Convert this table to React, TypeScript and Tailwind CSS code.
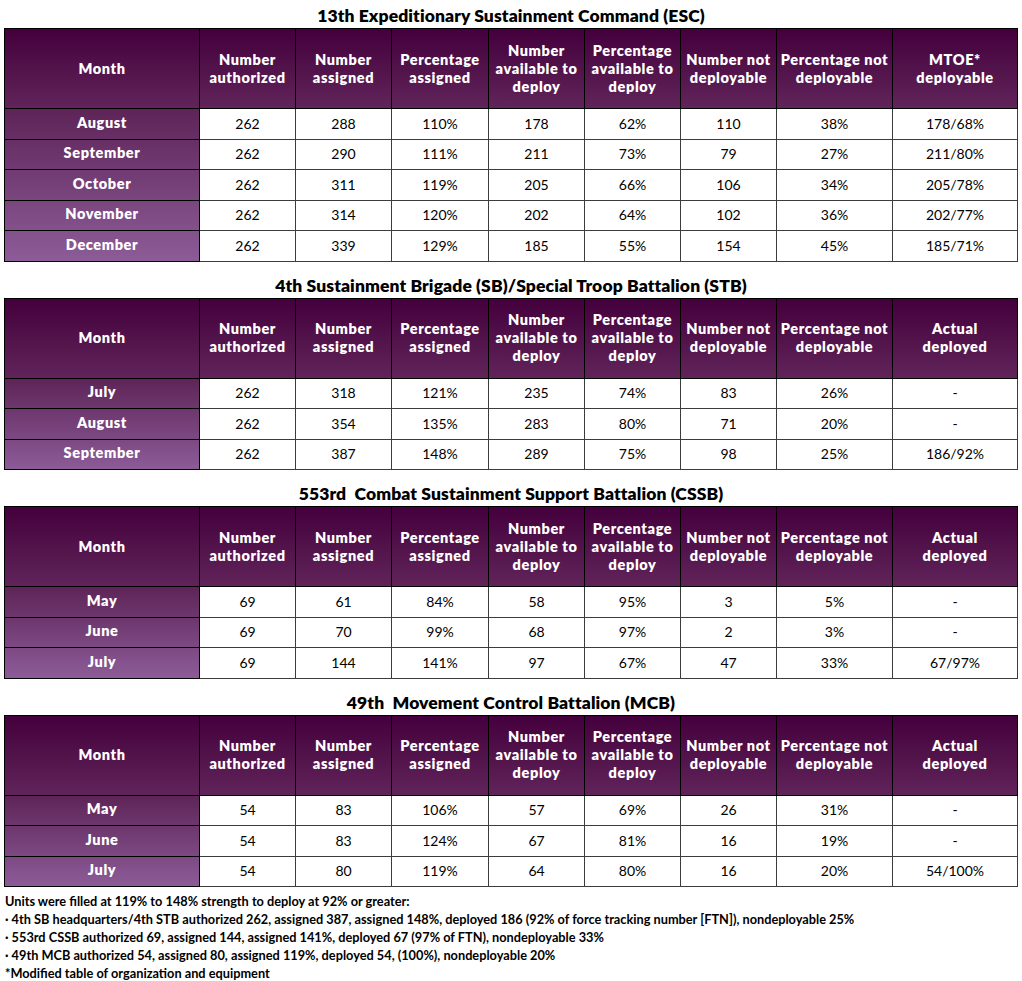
import React from "react";

const FONT = { fontFamily: "Lato, 'Open Sans', 'Liberation Sans', sans-serif" };

type Table = {
  title: string;
  last: string[];
  rows: string[][];
  monthBg: string[];
};

const headers: string[][] = [
  ["Month"],
  ["Number", "authorized"],
  ["Number", "assigned"],
  ["Percentage", "assigned"],
  ["Number", "available to", "deploy"],
  ["Percentage", "available to", "deploy"],
  ["Number not", "deployable"],
  ["Percentage not", "deployable"],
];

const bg5 = [
  "bg-linear-to-b from-[#5e2458] to-[#672f65]",
  "bg-linear-to-b from-[#672f65] to-[#703a72]",
  "bg-linear-to-b from-[#703a72] to-[#7a467e]",
  "bg-linear-to-b from-[#7a467e] to-[#83518b]",
  "bg-linear-to-b from-[#83518b] to-[#8c5c98]",
];
const bg3 = [
  "bg-linear-to-b from-[#5e2458] to-[#6d376d]",
  "bg-linear-to-b from-[#6d376d] to-[#7d4983]",
  "bg-linear-to-b from-[#7d4983] to-[#8c5c98]",
];

const tables: Table[] = [
  {
    title: "13th Expeditionary Sustainment Command (ESC)",
    last: ["MTOE*", "deployable"],
    monthBg: bg5,
    rows: [
      ["August", "262", "288", "110%", "178", "62%", "110", "38%", "178/68%"],
      ["September", "262", "290", "111%", "211", "73%", "79", "27%", "211/80%"],
      ["October", "262", "311", "119%", "205", "66%", "106", "34%", "205/78%"],
      ["November", "262", "314", "120%", "202", "64%", "102", "36%", "202/77%"],
      ["December", "262", "339", "129%", "185", "55%", "154", "45%", "185/71%"],
    ],
  },
  {
    title: "4th Sustainment Brigade (SB)/Special Troop Battalion (STB)",
    last: ["Actual", "deployed"],
    monthBg: bg3,
    rows: [
      ["July", "262", "318", "121%", "235", "74%", "83", "26%", "-"],
      ["August", "262", "354", "135%", "283", "80%", "71", "20%", "-"],
      ["September", "262", "387", "148%", "289", "75%", "98", "25%", "186/92%"],
    ],
  },
  {
    title: "553rd\u00a0 Combat Sustainment Support Battalion (CSSB)",
    last: ["Actual", "deployed"],
    monthBg: bg3,
    rows: [
      ["May", "69", "61", "84%", "58", "95%", "3", "5%", "-"],
      ["June", "69", "70", "99%", "68", "97%", "2", "3%", "-"],
      ["July", "69", "144", "141%", "97", "67%", "47", "33%", "67/97%"],
    ],
  },
  {
    title: "49th\u00a0 Movement Control Battalion (MCB)",
    last: ["Actual", "deployed"],
    monthBg: bg3,
    rows: [
      ["May", "54", "83", "106%", "57", "69%", "26", "31%", "-"],
      ["June", "54", "83", "124%", "67", "81%", "16", "19%", "-"],
      ["July", "54", "80", "119%", "64", "80%", "16", "20%", "54/100%"],
    ],
  },
];

function DataTable({ t, first }: { t: Table; first: boolean }) {
  const hdrs = [...headers, t.last];
  return (
    <div>
      <div
        className={`flex items-end justify-center pb-[2px] ${first ? "h-[28px]" : "h-[36px]"}`}
      >
        <span className="text-[17.5px] leading-[20px] font-extrabold tracking-[0.1px] text-black">{t.title}</span>
      </div>
      <div className="grid grid-cols-[195px_96px_96px_97px_96px_96px_96px_116px_125px] border-l border-t border-black">
        {hdrs.map((h, i) => (
          <div
            key={i}
            className="h-[80px] flex flex-col items-center justify-center border-r border-b border-black bg-linear-to-b from-[#44003c] to-[#60235a] text-white font-extrabold text-[14.5px] leading-[18px] tracking-[0.6px] text-center"
          >
            {h.map((l, j) => (
              <span key={j} className="whitespace-nowrap">{l}</span>
            ))}
          </div>
        ))}
        {t.rows.map((r, ri) =>
          r.map((c, ci) =>
            ci === 0 ? (
              <div
                key={`${ri}-${ci}`}
                className={`h-[30.5px] flex items-center justify-center pb-[2px] border-r border-b border-black text-white font-extrabold text-[14.5px] tracking-[0.6px] ${t.monthBg[ri]}`}
              >
                {c}
              </div>
            ) : (
              <div
                key={`${ri}-${ci}`}
                className="h-[30.5px] flex items-center justify-center pb-[1px] border-r border-b border-[#3c3c3c] bg-white text-black text-[14px]"
              >
                {c}
              </div>
            )
          )
        )}
      </div>
    </div>
  );
}

export default function App() {
  return (
    <div className="w-[1022px] h-[981px] bg-white px-[4px]" style={FONT}>
      {tables.map((t, i) => (
        <DataTable key={i} t={t} first={i === 0} />
      ))}
      <div className="pt-[5px] pl-[1px] text-[12.75px] leading-[18px] font-bold text-black">
        <div>Units were filled at 119% to 148% strength to deploy at 92% or greater:</div>
        <div>· 4th SB headquarters/4th STB authorized 262, assigned 387, assigned 148%, deployed 186 (92% of force tracking number [FTN]), nondeployable 25%</div>
        <div>· 553rd CSSB authorized 69, assigned 144, assigned 141%, deployed 67 (97% of FTN), nondeployable 33%</div>
        <div>· 49th MCB authorized 54, assigned 80, assigned 119%, deployed 54, (100%), nondeployable 20%</div>
        <div>*Modified table of organization and equipment</div>
      </div>
    </div>
  );
}
